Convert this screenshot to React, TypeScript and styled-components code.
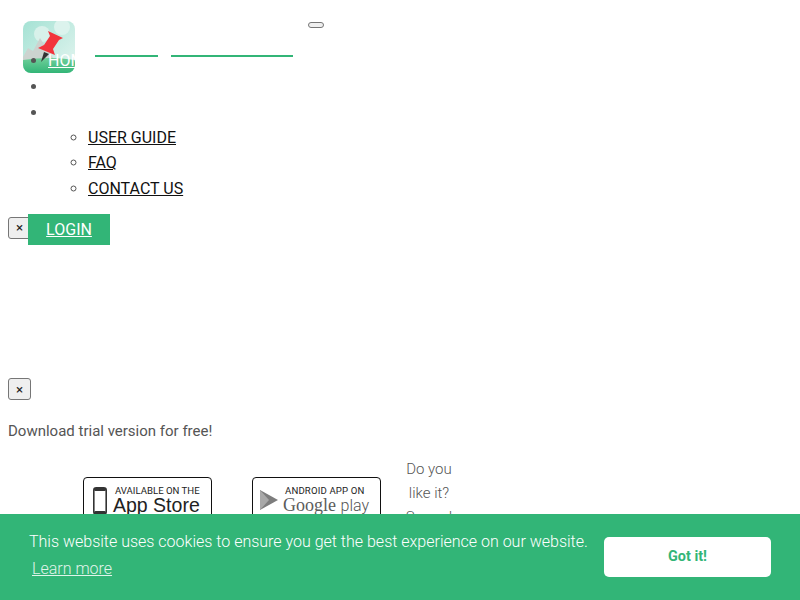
import styled, { createGlobalStyle } from 'styled-components'

const GREEN = '#32b577'

const GlobalStyle = createGlobalStyle`
  body {
    margin: 8px;
    background: #fff;
    color: #555;
    font-family: Roboto, "Liberation Sans", sans-serif;
    font-size: 16px;
    line-height: 1.6;
  }
`

const TopBar = styled.div`
  display: flex;
  align-items: flex-start;
  height: 40.4px;
  padding-left: 15px;
  box-sizing: border-box;
`

const LogoBox = styled.div`
  flex: none;
  width: 52px;
  height: 52px;
  margin-top: 13px;
  border-radius: 8px;
  overflow: hidden;
`

const BrandLine = styled.a<{ $width: number }>`
  flex: none;
  width: ${(p) => p.$width}px;
  height: 2px;
  margin-top: 47px;
  background: ${GREEN};
`

const BrandLines = styled.div`
  display: flex;
  gap: 13px;
  margin-left: 20px;
`

const Toggler = styled.button`
  flex: none;
  width: 16px;
  height: 6px;
  margin: 14px 0 0 15px;
  padding: 0;
  border: 1px solid #767676;
  border-radius: 3px;
  background: #efefef;
`

const NavList = styled.ul`
  position: relative;
  margin: 0;
  padding-left: 40px;
`

const SubList = styled.ul`
  margin: -0.4px 0 0;
  padding-left: 40px;
  list-style: circle;
`

const HomeLink = styled.a`
  color: #fff;
  text-decoration: underline;
`

const SubLink = styled.a`
  color: #111;
  text-decoration: underline;
`

const LoginRow = styled.div`
  display: flex;
  align-items: flex-start;
  margin-top: 12px;
`

const CloseButton = styled.button`
  flex: none;
  width: 23px;
  height: 22px;
  padding: 0;
  border: 1px solid #767676;
  border-radius: 3px;
  background: #efefef;
  color: #222;
  font-family: Roboto, sans-serif;
  font-size: 13.33px;
  line-height: 1;
`

const LoginClose = styled(CloseButton)`
  margin-top: 3px;
`

const LoginLink = styled.a`
  position: relative;
  width: 82px;
  height: 31px;
  margin-left: -3px;
  background: ${GREEN};
  color: #fff;
  text-align: center;
  line-height: 31px;
  text-decoration: underline;
`

const DownloadBlock = styled.div`
  margin-top: 131px;
`

const Lead = styled.p`
  margin: 18px 0 12px;
  font-size: 15px;
  line-height: 25.6px;
`

const StoreRow = styled.div`
  display: flex;
  align-items: flex-start;
  padding-left: 75px;
`

const StoreBadge = styled.a`
  flex: none;
  display: flex;
  width: 129px;
  height: 46px;
  margin-top: 20px;
  margin-right: 40px;
  box-sizing: border-box;
  border: 1px solid #111;
  border-radius: 4px;
  padding: 8px 0 0 9px;
  gap: 6px;
  color: #222;
  background: #fff;
`

const GoogleBadge = styled(StoreBadge)`
  padding-left: 7px;
  margin-right: 18px;
  gap: 4px;
`

const BadgeText = styled.div`
  display: flex;
  flex-direction: column;
`

const BadgeSmall = styled.span`
  padding-left: 2px;
  font-family: Roboto, sans-serif;
  font-size: 9.6px;
  line-height: 10px;
  white-space: nowrap;
`

const GoogleSmall = styled(BadgeSmall)`
  letter-spacing: 0.15px;
`

const BadgeLarge = styled.span`
  font-family: "Liberation Sans", sans-serif;
  font-size: 19.5px;
  line-height: 18px;
  white-space: nowrap;
`

const GoogleLarge = styled(BadgeLarge)`
  font-family: "Liberation Serif", serif;
  font-size: 18px;
  color: #5c5c5c;
`

const PlayWord = styled.span`
  font-family: Roboto, sans-serif;
  font-size: 16px;
  font-weight: 300;
  color: #555;
`

const LikeText = styled.div`
  flex: none;
  width: 60px;
  font-size: 15px;
  text-align: center;
  font-weight: 300;
  line-height: 24px;
  color: #555;
`

const CookieBar = styled.div`
  position: fixed;
  left: 0;
  right: 0;
  bottom: 0;
  height: 86px;
  box-sizing: border-box;
  display: flex;
  justify-content: space-between;
  padding: 14px 29px 0;
  background: ${GREEN};
  color: #fff;
`

const CookieMessage = styled.div`
  font-weight: 300;
  font-size: 16px;
  line-height: 27px;
  white-space: nowrap;
`

const LearnMore = styled.a`
  display: block;
  margin: 0 0 0 3px;
  width: fit-content;
  color: #fff;
  opacity: 0.85;
  text-decoration: underline;
`

const GotIt = styled.a`
  flex: none;
  width: 167px;
  height: 40px;
  margin-top: 9px;
  border-radius: 5px;
  background: #fff;
  color: ${GREEN};
  font-size: 14.4px;
  font-weight: 700;
  line-height: 40px;
  text-align: center;
`

function Logo() {
  return (
    <svg width="52" height="52" viewBox="0 0 52 52">
      <defs>
        <linearGradient id="sky" x1="0" y1="0" x2="1" y2="1">
          <stop offset="0" stopColor="#a5e2d4" />
          <stop offset="1" stopColor="#e4f5f0" />
        </linearGradient>
        <linearGradient id="grass" x1="0" y1="0" x2="0" y2="1">
          <stop offset="0" stopColor="#6fcf9a" />
          <stop offset="1" stopColor="#32b577" />
        </linearGradient>
      </defs>
      <rect width="52" height="52" fill="url(#sky)" />
      <circle cx="39" cy="6" r="8" fill="#dcf3ed" />
      <circle cx="19" cy="13" r="8" fill="#d8f1ea" />
      <path d="M0 36 L5 27 L10 30 L17 17 L32 40 H0 Z" fill="#ccd3cf" />
      <path d="M0 39 Q26 35 52 39 V52 H0 Z" fill="url(#grass)" />
      <path d="M21 31 L26 33 L18 41 Z" fill="#333" />
      <path d="M25 10 L40 17 L36 19 L30 28 L32 34 L15 27 L21 24 L27 15 Z" fill="#f2343c" />
    </svg>
  )
}

function PhoneIcon() {
  return (
    <svg width="14" height="29" viewBox="0 0 14 29">
      <rect x="0.8" y="1.8" width="12.4" height="26.4" rx="2.5" fill="#fff" stroke="#333" strokeWidth="1.6" />
      <rect x="1" y="2" width="12" height="3" rx="1.5" fill="#333" />
      <rect x="1" y="25" width="12" height="3" rx="1.5" fill="#333" />
    </svg>
  )
}

function PlayIcon() {
  return (
    <svg width="19" height="26" viewBox="0 0 19 26">
      <path d="M0 4 L18 14 L0 24 Z" fill="#7d7d7d" />
      <path d="M0 4 L9 14 L0 24 Z" fill="#a8a8a8" />
    </svg>
  )
}

export default function App() {
  return (
    <>
      <GlobalStyle />
      <TopBar>
        <LogoBox>
          <Logo />
        </LogoBox>
        <BrandLines>
          <BrandLine $width={63} />
          <BrandLine $width={122} />
        </BrandLines>
        <Toggler />
      </TopBar>
      <NavList>
        <li>
          <HomeLink>HOME</HomeLink>
        </li>
        <li>&nbsp;</li>
        <li>
          &nbsp;
          <SubList>
            <li>
              <SubLink>USER GUIDE</SubLink>
            </li>
            <li>
              <SubLink>FAQ</SubLink>
            </li>
            <li>
              <SubLink>CONTACT US</SubLink>
            </li>
          </SubList>
        </li>
      </NavList>
      <LoginRow>
        <LoginClose>×</LoginClose>
        <LoginLink>LOGIN</LoginLink>
      </LoginRow>
      <DownloadBlock>
        <CloseButton>×</CloseButton>
        <Lead>Download trial version for free!</Lead>
        <StoreRow>
          <StoreBadge>
            <PhoneIcon />
            <BadgeText>
              <BadgeSmall>AVAILABLE ON THE</BadgeSmall>
              <BadgeLarge>App Store</BadgeLarge>
            </BadgeText>
          </StoreBadge>
          <GoogleBadge>
            <PlayIcon />
            <BadgeText>
              <GoogleSmall>ANDROID APP ON</GoogleSmall>
              <GoogleLarge>
                Google <PlayWord>play</PlayWord>
              </GoogleLarge>
            </BadgeText>
          </GoogleBadge>
          <LikeText>Do you like it? Spread</LikeText>
        </StoreRow>
      </DownloadBlock>
      <CookieBar>
        <CookieMessage>
          This website uses cookies to ensure you get the best experience on our website.
          <LearnMore>Learn more</LearnMore>
        </CookieMessage>
        <GotIt>Got it!</GotIt>
      </CookieBar>
    </>
  )
}
